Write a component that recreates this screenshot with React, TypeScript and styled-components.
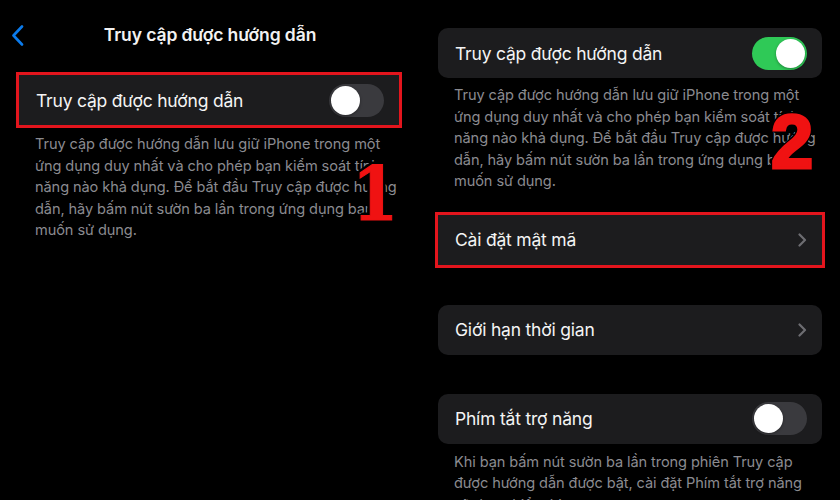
import styled, { createGlobalStyle } from "styled-components";

const GlobalStyle = createGlobalStyle`
  html, body {
    margin: 0;
    padding: 0;
    background: #000;
    overflow: hidden;
  }
  body {
    font-family: Inter, "Noto Sans", "Liberation Sans", sans-serif;
    -webkit-font-smoothing: antialiased;
  }
`;

const Screen = styled.div`
  width: 840px;
  height: 500px;
  display: grid;
  grid-template-columns: 420px 420px;
  background: #000;
  overflow: hidden;
`;

const Pane = styled.section<{ $pad: string }>`
  position: relative;
  display: flex;
  flex-direction: column;
  padding: ${(p) => p.$pad};
  box-sizing: border-box;
`;

const NavBar = styled.header`
  position: relative;
  height: 68px;
  display: flex;
  align-items: center;
  justify-content: center;
  margin: 0 -21px 0 -19px;
`;

const BackButton = styled.button`
  position: absolute;
  left: 8px;
  top: 24px;
  width: 18px;
  height: 22px;
  padding: 0;
  border: 0;
  background: none;
  display: flex;
  align-items: center;
  justify-content: center;
`;

const Title = styled.h1`
  margin: 0;
  color: #f2f2f2;
  font-size: 17.5px;
  font-weight: 600;
  letter-spacing: -0.1px;
`;

const Cell = styled.div<{ $marked?: boolean; $top?: number }>`
  height: 50px;
  margin-top: ${(p) => p.$top ?? 0}px;
  display: flex;
  align-items: center;
  justify-content: space-between;
  padding: 0 15px 0 17px;
  background: #1c1c1e;
  border-radius: ${(p) => (p.$marked ? "0" : "10px")};
  box-shadow: ${(p) => (p.$marked ? "0 0 0 3px #e3151d" : "none")};
  flex-shrink: 0;
`;

const Label = styled.span`
  color: #f4f4f4;
  font-size: 17.5px;
  letter-spacing: -0.2px;
`;

const Note = styled.p<{ $top: number }>`
  margin: ${(p) => p.$top}px 0 0;
  padding: 0 16px;
  color: #8b8b90;
  font-size: 14.6px;
  line-height: 21.5px;
  letter-spacing: -0.1px;
  white-space: nowrap;
`;

const Track = styled.div<{ $on: boolean }>`
  width: 55px;
  height: 33px;
  border-radius: 17px;
  background: ${(p) => (p.$on ? "#2fc957" : "#3a3a3e")};
  display: flex;
  align-items: center;
  justify-content: ${(p) => (p.$on ? "flex-end" : "flex-start")};
  padding: 0 2px;
  box-sizing: border-box;
`;

const Knob = styled.div`
  width: 29px;
  height: 29px;
  border-radius: 50%;
  background: #fff;
  box-shadow: 0 1px 3px rgba(0, 0, 0, 0.35);
`;

// big red step numbers drawn over the screens, with a black rim
const Step = styled.span<{ $serif?: boolean; $left: number; $top: number }>`
  position: absolute;
  left: ${(p) => p.$left}px;
  top: ${(p) => p.$top}px;
  color: #f01212;
  font-family: ${(p) =>
    p.$serif
      ? '"DejaVu Serif Condensed", "DejaVu Serif", serif'
      : '"Liberation Sans", sans-serif'};
  font-stretch: ${(p) => (p.$serif ? "condensed" : "normal")};
  font-weight: 700;
  font-size: ${(p) => (p.$serif ? 74 : 76)}px;
  line-height: 1;
  -webkit-text-stroke: ${(p) => (p.$serif ? 1 : 3)}px #f01212;
  text-shadow: 3px 0 0 #000, -3px 0 0 #000, 0 3px 0 #000, 0 -3px 0 #000,
    2px 2px 0 #000, -2px 2px 0 #000, 2px -2px 0 #000, -2px -2px 0 #000;
`;

function Toggle({ on }: { on: boolean }) {
  return (
    <Track $on={on}>
      <Knob />
    </Track>
  );
}

function Chevron() {
  return (
    <svg width="9" height="14" viewBox="0 0 9 14" fill="none">
      <path
        d="M1.5 1.5 L7 7 L1.5 12.5"
        stroke="#6d6d72"
        strokeWidth="2.2"
        strokeLinecap="round"
        strokeLinejoin="round"
      />
    </svg>
  );
}

export default function App() {
  return (
    <>
      <GlobalStyle />
      <Screen>
        <Pane $pad="0 21px 0 19px">
          <NavBar>
            <BackButton aria-label="Quay lại">
              <svg width="13" height="21" viewBox="0 0 13 21" fill="none">
                <path
                  d="M11 1.5 L2.5 10.5 L11 19.5"
                  stroke="#0b7bec"
                  strokeWidth="2.6"
                  strokeLinecap="round"
                  strokeLinejoin="round"
                />
              </svg>
            </BackButton>
            <Title>Truy cập được hướng dẫn</Title>
          </NavBar>
          <Cell $marked $top={7}>
            <Label>Truy cập được hướng dẫn</Label>
            <Toggle on={false} />
          </Cell>
          <Note $top={9}>
            Truy cập được hướng dẫn lưu giữ iPhone trong một
            <br />
            ứng dụng duy nhất và cho phép bạn kiểm soát tính
            <br />
            năng nào khả dụng. Để bắt đầu Truy cập được hướng
            <br />
            dẫn, hãy bấm nút sườn ba lần trong ứng dụng bạn
            <br />
            muốn sử dụng.
          </Note>
          <Step $serif $left={352} $top={157}>
            1
          </Step>
        </Pane>

        <Pane $pad="28px 18px 0 18px">
          <Cell>
            <Label>Truy cập được hướng dẫn</Label>
            <Toggle on />
          </Cell>
          <Note $top={7}>
            Truy cập được hướng dẫn lưu giữ iPhone trong một
            <br />
            ứng dụng duy nhất và cho phép bạn kiểm soát tính
            <br />
            năng nào khả dụng. Để bắt đầu Truy cập được hướng
            <br />
            dẫn, hãy bấm nút sườn ba lần trong ứng dụng bạn
            <br />
            muốn sử dụng.
          </Note>
          <Cell $marked $top={22}>
            <Label>Cài đặt mật mã</Label>
            <Chevron />
          </Cell>
          <Cell $top={40}>
            <Label>Giới hạn thời gian</Label>
            <Chevron />
          </Cell>
          <Cell $top={39}>
            <Label>Phím tắt trợ năng</Label>
            <Toggle on={false} />
          </Cell>
          <Note $top={8}>
            Khi bạn bấm nút sườn ba lần trong phiên Truy cập
            <br />
            được hướng dẫn được bật, cài đặt Phím tắt trợ năng
            <br />
            sẽ được hiển thị.
          </Note>
          <Step $left={351} $top={104}>
            2
          </Step>
        </Pane>
      </Screen>
    </>
  );
}
